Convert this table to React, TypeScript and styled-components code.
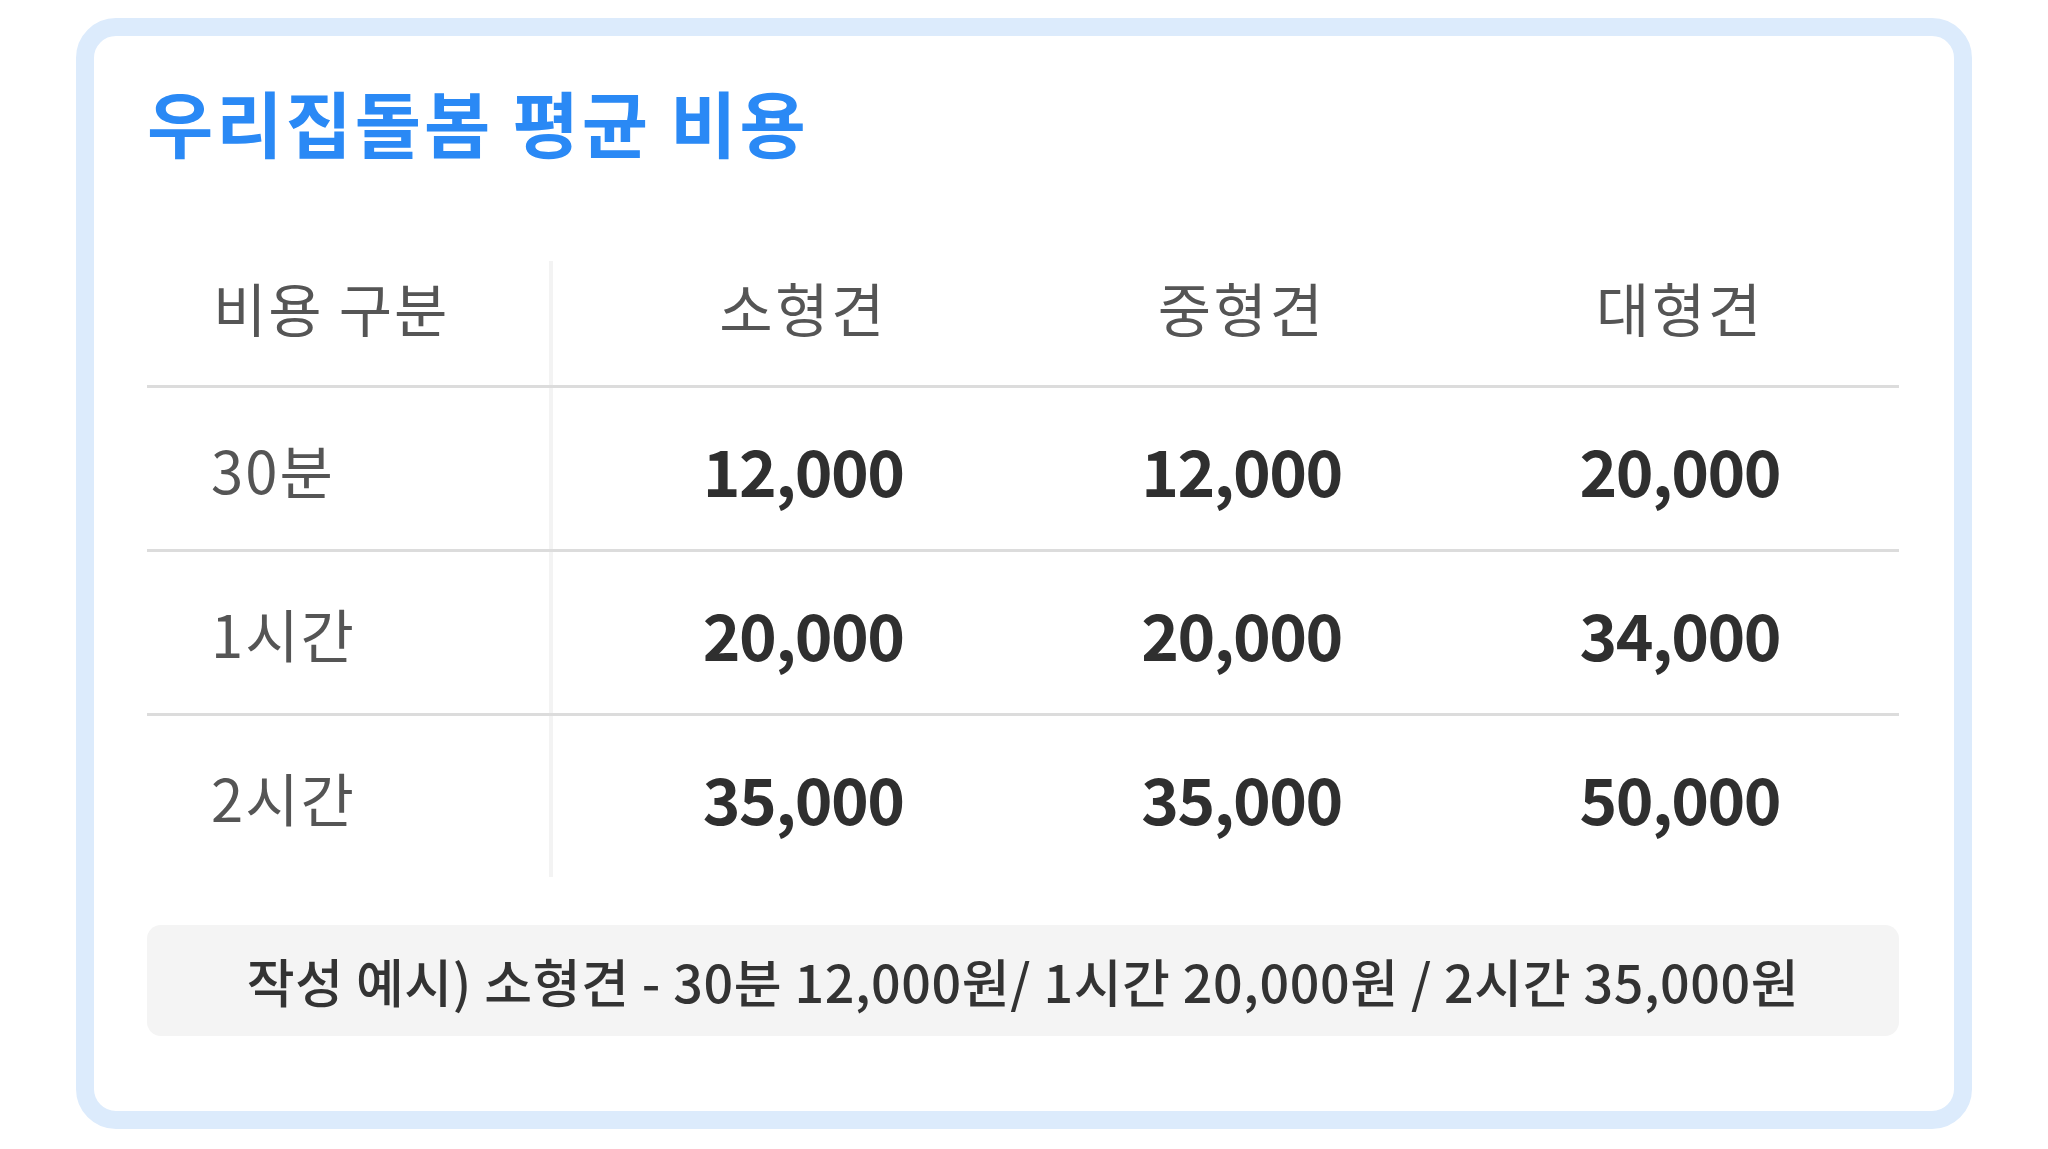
import React from 'react';
import styled, { createGlobalStyle } from 'styled-components';

const GlobalStyle = createGlobalStyle`
  html, body {
    margin: 0;
    padding: 0;
    background: #ffffff;
  }
  body {
    font-family: "Noto Sans CJK KR", "Noto Sans", sans-serif;
  }
  * {
    box-sizing: border-box;
  }
`;

const Page = styled.div`
  padding: 18px 76px 19px;
`;

const Card = styled.section`
  border: 18px solid #dcebfc;
  border-radius: 40px;
  background: #ffffff;
  padding: 42px 55px 75px 53px;
`;

const Title = styled.h1`
  margin: 0 0 97px;
  font-size: 72px;
  line-height: 1.2;
  font-weight: 700;
  letter-spacing: 3px;
  color: #2a89f5;
`;

const Table = styled.div`
  display: flex;
  flex-direction: column;
`;

const Row = styled.div<{ $head?: boolean; $last?: boolean }>`
  display: grid;
  grid-template-columns: 406px 1fr;
  height: ${(p) => (p.$head ? 127 : p.$last ? 161 : 164)}px;
  border-bottom: ${(p) => (p.$last ? 'none' : '3px solid #dcdcdc')};
`;

const LabelCell = styled.div<{ $head?: boolean }>`
  display: flex;
  align-items: center;
  padding: ${(p) => (p.$head ? '0 0 33px 66px' : '0 0 0 64px')};
  border-right: 4px solid #f3f3f3;
  font-size: 58px;
  font-weight: 400;
  letter-spacing: 2px;
  color: #555555;
  white-space: nowrap;
`;

const DataGroup = styled.div`
  display: grid;
  grid-template-columns: repeat(3, 1fr);
  padding-left: 31px;
`;

const HeadCell = styled.div`
  display: flex;
  align-items: center;
  justify-content: center;
  padding-bottom: 33px;
  font-size: 58px;
  font-weight: 400;
  letter-spacing: 2.5px;
  color: #555555;
  white-space: nowrap;
`;

const PriceCell = styled.div`
  display: flex;
  align-items: center;
  justify-content: center;
  font-size: 64px;
  font-weight: 700;
  letter-spacing: -1.5px;
  color: #2f2f2f;
  white-space: nowrap;
`;

const Example = styled.div`
  margin-top: 48px;
  height: 111px;
  display: flex;
  align-items: center;
  justify-content: center;
  background: #f4f4f4;
  border-radius: 14px;
  font-size: 52px;
  font-weight: 500;
  letter-spacing: 0.6px;
  color: #333333;
  white-space: nowrap;
`;

const sizes = ['소형견', '중형견', '대형견'];

const rows: { label: string; prices: string[] }[] = [
  { label: '30분', prices: ['12,000', '12,000', '20,000'] },
  { label: '1시간', prices: ['20,000', '20,000', '34,000'] },
  { label: '2시간', prices: ['35,000', '35,000', '50,000'] },
];

export default function App() {
  return (
    <>
      <GlobalStyle />
      <Page>
        <Card>
          <Title>우리집돌봄 평균 비용</Title>
          <Table>
            <Row $head>
              <LabelCell $head>비용 구분</LabelCell>
              <DataGroup>
                {sizes.map((s) => (
                  <HeadCell key={s}>{s}</HeadCell>
                ))}
              </DataGroup>
            </Row>
            {rows.map((r, i) => (
              <Row key={r.label} $last={i === rows.length - 1}>
                <LabelCell>{r.label}</LabelCell>
                <DataGroup>
                  {r.prices.map((p, j) => (
                    <PriceCell key={j}>{p}</PriceCell>
                  ))}
                </DataGroup>
              </Row>
            ))}
          </Table>
          <Example>작성 예시) 소형견 - 30분 12,000원/ 1시간 20,000원 / 2시간 35,000원</Example>
        </Card>
      </Page>
    </>
  );
}
